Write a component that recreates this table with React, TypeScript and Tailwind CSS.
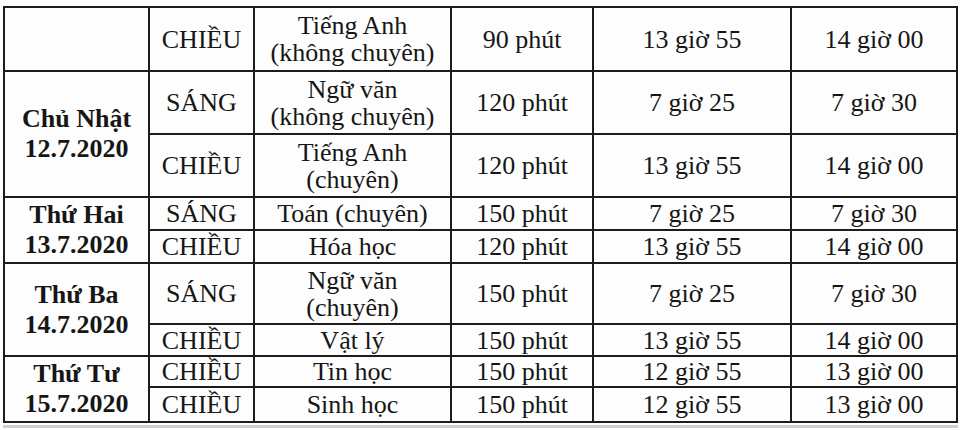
import React from "react";

type Row = {
  day?: { lines: string[]; span: number };
  emptyDay?: boolean;
  session: string;
  subject: string[];
  duration: string;
  open: string;
  start: string;
  h: string;
};

// heights are written out so Tailwind can see them
const rows: Row[] = [
  { emptyDay: true, session: "CHIỀU", subject: ["Tiếng Anh", "(không chuyên)"], duration: "90 phút", open: "13 giờ 55", start: "14 giờ 00", h: "h-[64px]" },
  { day: { lines: ["Chủ Nhật", "12.7.2020"], span: 2 }, session: "SÁNG", subject: ["Ngữ văn", "(không chuyên)"], duration: "120 phút", open: "7 giờ 25", start: "7 giờ 30", h: "h-[63px]" },
  { session: "CHIỀU", subject: ["Tiếng Anh", "(chuyên)"], duration: "120 phút", open: "13 giờ 55", start: "14 giờ 00", h: "h-[63px]" },
  { day: { lines: ["Thứ Hai", "13.7.2020"], span: 2 }, session: "SÁNG", subject: ["Toán (chuyên)"], duration: "150 phút", open: "7 giờ 25", start: "7 giờ 30", h: "h-[33px]" },
  { session: "CHIỀU", subject: ["Hóa học"], duration: "120 phút", open: "13 giờ 55", start: "14 giờ 00", h: "h-[33px]" },
  { day: { lines: ["Thứ Ba", "14.7.2020"], span: 2 }, session: "SÁNG", subject: ["Ngữ văn", "(chuyên)"], duration: "150 phút", open: "7 giờ 25", start: "7 giờ 30", h: "h-[61px]" },
  { session: "CHIỀU", subject: ["Vật lý"], duration: "150 phút", open: "13 giờ 55", start: "14 giờ 00", h: "h-[32px]" },
  { day: { lines: ["Thứ Tư", "15.7.2020"], span: 2 }, session: "CHIỀU", subject: ["Tin học"], duration: "150 phút", open: "12 giờ 55", start: "13 giờ 00", h: "h-[31px]" },
  { session: "CHIỀU", subject: ["Sinh học"], duration: "150 phút", open: "12 giờ 55", start: "13 giờ 00", h: "h-[35px]" },
];

const cell = "border-2 border-[#1c1c1c] p-0 text-center align-middle";

export default function App() {
  return (
    <div
      className="w-[960px] h-[430px] overflow-hidden bg-[#fdfdfd] pt-[6px] pl-[3px] text-[#161616]"
      style={{ fontFamily: '"Liberation Serif", "Times New Roman", serif' }}
    >
      <table className="w-[953px] table-fixed border-collapse text-[26px] leading-[27px]">
        <colgroup>
          <col className="w-[145px]" />
          <col className="w-[105px]" />
          <col className="w-[197px]" />
          <col className="w-[142px]" />
          <col className="w-[198px]" />
          <col className="w-[166px]" />
        </colgroup>
        <tbody>
          {rows.map((r, i) => (
            <tr key={i} className={r.h}>
              {r.emptyDay ? <td className={cell} /> : null}
              {r.day ? (
                <td rowSpan={r.day.span} className={`${cell} font-bold leading-[30px]`}>
                  {r.day.lines.map((l) => (
                    <div key={l}>{l}</div>
                  ))}
                </td>
              ) : null}
              <td className={cell}>{r.session}</td>
              <td className={cell}>
                {r.subject.map((s) => (
                  <div key={s}>{s}</div>
                ))}
              </td>
              <td className={cell}>{r.duration}</td>
              <td className={cell}>{r.open}</td>
              <td className={cell}>{r.start}</td>
            </tr>
          ))}
        </tbody>
      </table>
      <div className="mt-[2px] h-[3px] w-[955px] bg-[#cfcfcf]" />
    </div>
  );
}
